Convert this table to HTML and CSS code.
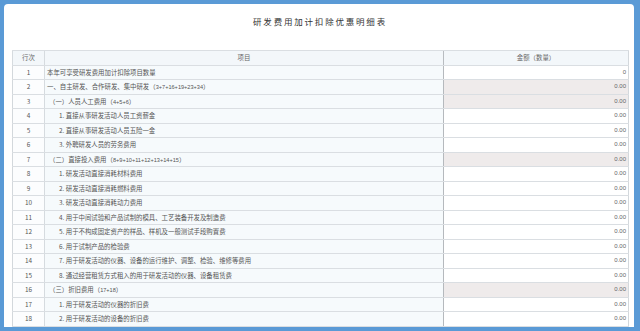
FILE: index.html
```html
<!DOCTYPE html>
<html lang="zh-CN">
<head>
<meta charset="utf-8">
<link rel="stylesheet" href="styles.css">
</head>
<body>
<div class="frame">
  <div class="title">研发费用加计扣除优惠明细表</div>
  <table class="grid">
    <colgroup><col class="c-no"><col class="c-item"><col class="c-amt"></colgroup>
    <thead>
      <tr><th>行次</th><th>项目</th><th>金额（数量）</th></tr>
    </thead>
    <tbody>
      <tr><td class="no">1</td><td class="item">本年可享受研发费用加计扣除项目数量</td><td class="amt">0</td></tr>
      <tr><td class="no">2</td><td class="item">一、自主研发、合作研发、集中研发（<span class="f">3+7+16+19+23+34</span>）</td><td class="amt sum">0.00</td></tr>
      <tr><td class="no">3</td><td class="item l1">（一）人员人工费用（<span class="f">4+5+6</span>）</td><td class="amt sum">0.00</td></tr>
      <tr><td class="no">4</td><td class="item l2">1. 直接从事研发活动人员工资薪金</td><td class="amt">0.00</td></tr>
      <tr><td class="no">5</td><td class="item l2">2. 直接从事研发活动人员五险一金</td><td class="amt">0.00</td></tr>
      <tr><td class="no">6</td><td class="item l2">3. 外聘研发人员的劳务费用</td><td class="amt">0.00</td></tr>
      <tr><td class="no">7</td><td class="item l1">（二）直接投入费用（<span class="f">8+9+10+11+12+13+14+15</span>）</td><td class="amt sum">0.00</td></tr>
      <tr><td class="no">8</td><td class="item l2">1. 研发活动直接消耗材料费用</td><td class="amt">0.00</td></tr>
      <tr><td class="no">9</td><td class="item l2">2. 研发活动直接消耗燃料费用</td><td class="amt">0.00</td></tr>
      <tr><td class="no">10</td><td class="item l2">3. 研发活动直接消耗动力费用</td><td class="amt">0.00</td></tr>
      <tr><td class="no">11</td><td class="item l2">4. 用于中间试验和产品试制的模具、工艺装备开发及制造费</td><td class="amt">0.00</td></tr>
      <tr><td class="no">12</td><td class="item l2">5. 用于不构成固定资产的样品、样机及一般测试手段购置费</td><td class="amt">0.00</td></tr>
      <tr><td class="no">13</td><td class="item l2">6. 用于试制产品的检验费</td><td class="amt">0.00</td></tr>
      <tr><td class="no">14</td><td class="item l2">7. 用于研发活动的仪器、设备的运行维护、调整、检验、维修等费用</td><td class="amt">0.00</td></tr>
      <tr><td class="no">15</td><td class="item l2">8. 通过经营租赁方式租入的用于研发活动的仪器、设备租赁费</td><td class="amt">0.00</td></tr>
      <tr><td class="no">16</td><td class="item l1">（三）折旧费用（<span class="f">17+18</span>）</td><td class="amt sum">0.00</td></tr>
      <tr><td class="no">17</td><td class="item l2">1. 用于研发活动的仪器的折旧费</td><td class="amt">0.00</td></tr>
      <tr><td class="no">18</td><td class="item l2">2. 用于研发活动的设备的折旧费</td><td class="amt">0.00</td></tr>
    </tbody>
  </table>
</div>
</body>
</html>
```
FILE: styles.css
```css
html, body {
  margin: 0;
  padding: 0;
  width: 640px;
  height: 331px;
  overflow: hidden;
  background: #5a9ad6;
}
.frame {
  margin: 4px 6px 0 4px;
  height: 323px;
  background: #ffffff;
  border-radius: 4px 4px 0 0;
  overflow: hidden;
  padding: 0 6px 0 8px;
  box-sizing: border-box;
  font-family: "Noto Sans CJK SC", "Liberation Sans", sans-serif;
  color: #555;
}
.title {
  height: 46px;
  padding-top: 11px;
  box-sizing: border-box;
  text-align: center;
  font-size: 8.5px;
  letter-spacing: 1.8px;
  color: #333;
  line-height: 12px;
}
.grid {
  width: 616px;
  border-collapse: collapse;
  table-layout: fixed;
  font-size: 6.4px;
  border: 1px solid #d3d8dc;
}
.c-no { width: 32px; }
.c-item { width: 399px; }
.c-amt { width: 185px; }
.grid th, .grid td {
  height: 13.5px;
  padding: 0;
  line-height: 13.5px;
  border-top: 1px solid #dadee2;
  border-bottom: 1px solid #dadee2;
  white-space: nowrap;
  overflow: hidden;
}
.grid th {
  font-weight: normal;
  background: #f3f7fa;
  color: #666;
  text-align: center;
  border-left: 1px solid #d6dbdf;
}
.grid th:nth-child(3) { border-left: 1px solid #b8bcc0; }
.no {
  text-align: center;
  background: #fcfdfe;
  border-right: 1px solid #d6dbdf;
}
.item {
  background: #f6fafc;
  padding-left: 2px !important;
  border-right: 1px solid #b5b9bd;
}
.item.l1 { padding-left: 4px !important; }
.item.l2 { padding-left: 14px !important; }
.f {
  font-family: "Liberation Sans", sans-serif;
  font-size: 5.6px;
  line-height: 1;
}
.amt {
  text-align: right;
  padding-right: 2px !important;
  background: #ffffff;
  font-family: "Liberation Sans", sans-serif;
  font-size: 6px;
  color: #666;
}
.amt.sum { background: #efebeb; }
```
